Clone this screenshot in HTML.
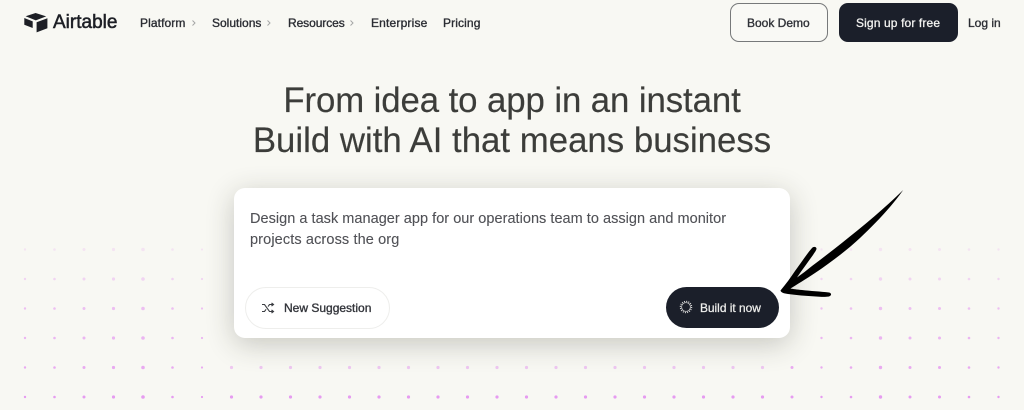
<!DOCTYPE html>
<html lang="en">
<head>
<meta charset="utf-8">
<title>Airtable</title>
<style>
html,body{margin:0;padding:0;width:1024px;height:410px;overflow:hidden;background:#f8f8f3;}
body{position:relative;font-family:"Liberation Sans",Arial,sans-serif;color:#1d1f25;}
.a{position:absolute;white-space:nowrap;}
.nav{font-size:12px;line-height:16px;top:15px;color:#2b2d33;-webkit-text-stroke:.35px #2b2d33;}
.chev{position:absolute;top:19px;width:8px;height:8px;}
h1{margin:0;font-weight:400;font-size:34.8px;line-height:40px;color:#3c3d3a;text-align:center;position:absolute;left:0;width:1024px;top:81px;-webkit-text-stroke:.15px #3c3d3a;}
.card{position:absolute;left:234px;top:188px;width:556px;height:150px;background:#fff;border-radius:11px;box-shadow:0 6px 28px rgba(40,40,30,.24);}
.txt{font-size:14.5px;line-height:21px;letter-spacing:.03px;color:#505156;left:250px;top:208.5px;-webkit-text-stroke:.1px #505156;}
</style>
</head>
<body>
<svg class="a" style="left:0;top:0" width="1024" height="410" viewBox="0 0 1024 410">
<defs>
<clipPath id="s"><rect x="0" y="230" width="215" height="180"/><rect x="812" y="230" width="212" height="180"/></clipPath>
<clipPath id="s2"><rect x="0" y="350" width="215" height="60"/><rect x="785" y="350" width="239" height="60"/></clipPath>
<clipPath id="m"><rect x="215" y="350" width="570" height="60"/></clipPath>
<g id="r" fill="#e48df0">
<circle cx="25" cy="0" r="1.2"/><circle cx="54.5" cy="0" r="1.3"/><circle cx="84" cy="0" r="1.5"/><circle cx="113.5" cy="0" r="1.6"/><circle cx="143" cy="0" r="1.8"/><circle cx="172.5" cy="0" r="1.3"/><circle cx="202" cy="0" r="1.1"/><circle cx="231.5" cy="0" r="1.6"/><circle cx="261" cy="0" r="1.6"/><circle cx="290.5" cy="0" r="1.6"/><circle cx="320" cy="0" r="1.6"/><circle cx="349.5" cy="0" r="1.6"/><circle cx="379" cy="0" r="1.6"/><circle cx="408.5" cy="0" r="1.6"/><circle cx="438" cy="0" r="1.6"/><circle cx="467.5" cy="0" r="1.6"/><circle cx="497" cy="0" r="1.6"/><circle cx="526.5" cy="0" r="1.6"/><circle cx="556" cy="0" r="1.6"/><circle cx="585.5" cy="0" r="1.6"/><circle cx="615" cy="0" r="1.6"/><circle cx="644.5" cy="0" r="1.6"/><circle cx="674" cy="0" r="1.6"/><circle cx="703.5" cy="0" r="1.6"/><circle cx="733" cy="0" r="1.6"/><circle cx="762.5" cy="0" r="1.6"/><circle cx="792" cy="0" r="1.5"/><circle cx="821.5" cy="0" r="1.2"/><circle cx="851" cy="0" r="1.3"/><circle cx="880.5" cy="0" r="1.7"/><circle cx="910" cy="0" r="1.5"/><circle cx="939.5" cy="0" r="1.5"/><circle cx="969" cy="0" r="1.3"/><circle cx="998.5" cy="0" r="1.2"/>
</g>
</defs>
<g clip-path="url(#s)">
<use href="#r" y="249.5" opacity=".18"/>
<use href="#r" y="279" opacity=".33"/>
<use href="#r" y="308.5" opacity=".52"/>
<use href="#r" y="338" opacity=".62"/>
</g>
<g clip-path="url(#s2)"><use href="#r" y="367.5" opacity=".72"/></g>
<g clip-path="url(#m)"><use href="#r" y="367.5" opacity=".45"/></g>
<use href="#r" y="397" opacity=".85"/>
</svg>

<svg class="a" style="left:24px;top:13px" width="24" height="20" viewBox="0 0 24 20">
<path fill="#1d1f25" d="M11.6 0 1.6 3.3 11.8 7.4 22.2 3.4Z"/>
<path fill="#1d1f25" d="M0.3 5 0.3 11.7 8.7 15 8.7 8.4Z"/>
<path fill="#1d1f25" d="M23.4 5.2 12.6 9.2 12.6 19.4 23.4 15.2Z"/>
</svg>
<div class="a" style="left:53px;top:12px;font-size:19px;line-height:22px;color:#1d1f25;-webkit-text-stroke:.5px #1d1f25;">Airtable</div>

<div class="a nav" style="left:140px;letter-spacing:.1px">Platform</div>
<svg class="chev" style="left:190px" viewBox="0 0 8 8"><path d="M2.5 1.5 5 4 2.5 6.5" fill="none" stroke="#a5a6a5" stroke-width="1"/></svg>
<div class="a nav" style="left:212px">Solutions</div>
<svg class="chev" style="left:265px" viewBox="0 0 8 8"><path d="M2.5 1.5 5 4 2.5 6.5" fill="none" stroke="#a5a6a5" stroke-width="1"/></svg>
<div class="a nav" style="left:288px;letter-spacing:-.08px">Resources</div>
<svg class="chev" style="left:348px" viewBox="0 0 8 8"><path d="M2.5 1.5 5 4 2.5 6.5" fill="none" stroke="#a5a6a5" stroke-width="1"/></svg>
<div class="a nav" style="left:371px;letter-spacing:.18px">Enterprise</div>
<div class="a nav" style="left:443px;letter-spacing:.12px">Pricing</div>

<div class="a" style="left:730px;top:3px;width:96px;height:37px;border:1px solid #77797a;border-radius:9px;background:#f9f9f5"></div>
<div class="a nav" style="left:747px;color:#33353a">Book Demo</div>
<div class="a" style="left:839px;top:3px;width:119px;height:39px;border-radius:9px;background:#1b1f2a"></div>
<div class="a nav" style="left:856px;color:#f2f2f0;-webkit-text-stroke:.3px #f2f2f0;letter-spacing:.13px">Sign up for free</div>
<div class="a nav" style="left:968px">Log in</div>

<h1><span style="letter-spacing:-.1px">From idea to app in an instant</span><br>Build with AI that means business</h1>

<div class="card"></div>
<div class="a txt">Design a task manager app for our operations team to assign and monitor<br><span style="letter-spacing:.12px">projects across the org</span></div>

<div class="a" style="left:245px;top:287px;width:143px;height:40px;border:1px solid #eeeeec;border-radius:21px;background:#fff"></div>
<svg class="a" style="left:261px;top:301px" width="14" height="14" viewBox="0 0 14 14">
<path d="M1 3.5h2.5l5 7H12M1 10.5h2.5l1.6-2.2M7 5.6l1.5-2.1H12M10.5 2 12.5 3.5 10.5 5M10.5 9 12.5 10.5 10.5 12" fill="none" stroke="#3b3d42" stroke-width="1.1"/>
</svg>
<div class="a" style="left:284px;top:300px;font-size:12px;line-height:16px;color:#33353b;-webkit-text-stroke:.35px #33353b">New Suggestion</div>

<div class="a" style="left:666px;top:287px;width:113px;height:41px;border-radius:21px;background:#1b1f2a"></div>
<svg class="a" style="left:679px;top:300px" width="14" height="14" viewBox="0 0 14 14">
<circle cx="7" cy="7" r="4.4" fill="none" stroke="#cfcfcf" stroke-width=".8"/>
<circle cx="7" cy="7" r="5.6" fill="none" stroke="#d8d8d8" stroke-width="1.3" stroke-dasharray="1 1.2"/>
</svg>
<div class="a" style="left:700px;top:300px;font-size:11.9px;line-height:16px;color:#eeeeec;-webkit-text-stroke:.25px #eeeeec">Build it now</div>

<svg class="a" style="left:770px;top:180px" width="145" height="125" viewBox="770 180 145 125">
<path fill="#000" d="M903.2 190C890 203 874 217 858 230C842 243 828 254 812 266C807 270 802 274 797 277.5C802 270 808 262 813 255C815 252 816.5 250 816.5 248.5C816 246.5 813.5 246.5 812 248C806 255 801 263 795 271C791 277 786 284 780.5 290.5C781 292.5 784 293.5 788 294C796 295 806 296 816 296.5C821 297 826 297 829 296.5C832 295.5 831.5 293 829 292.5C821 291.5 810 291 802 290C797 289.5 793 289 790.5 288.5C796 285 806 279 815 273C830 263 846 251 860 238C876 223 892 206 903.2 190Z"/>
</svg>
</body>
</html>
